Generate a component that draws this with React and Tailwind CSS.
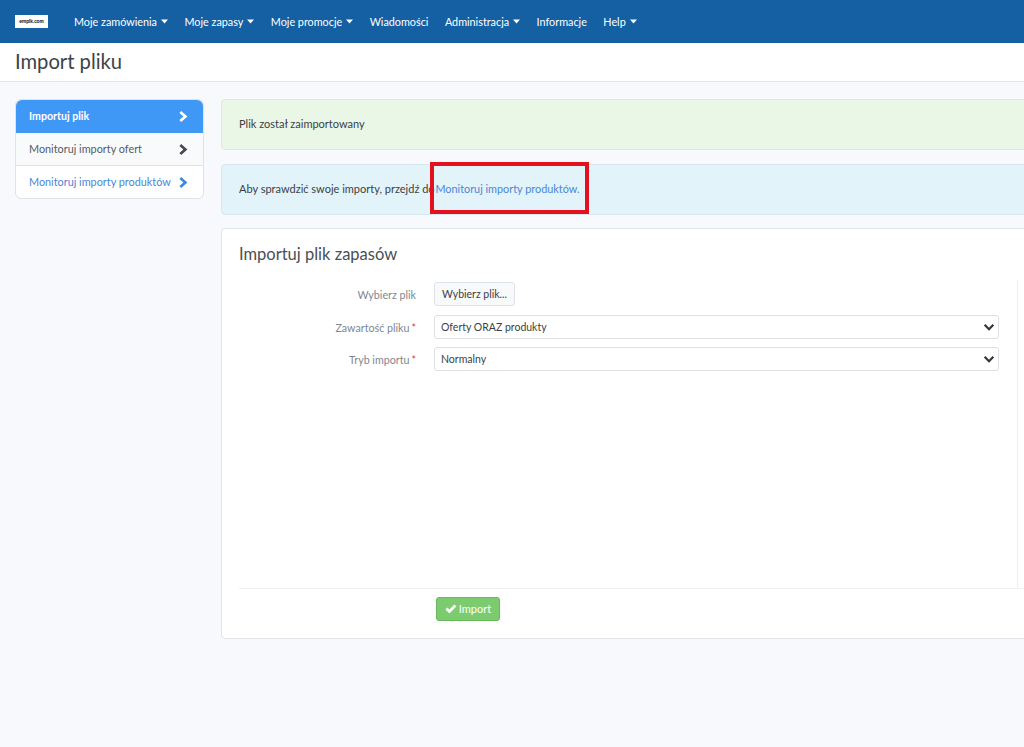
/**
 * Import pliku - strona importu zapasów
 */

const menu = [
    { label: 'Moje zamówienia', caret: true },
    { label: 'Moje zapasy', caret: true },
    { label: 'Moje promocje', caret: true },
    { label: 'Wiadomości' },
    { label: 'Administracja', caret: true },
    { label: 'Informacje' },
    { label: 'Help', caret: true },
];

const boczne = [
    { label: 'Importuj plik', wiersz: 'bg-[#3f97f6] text-white font-bold h-[33px] rounded-t-[6px] text-[10.6px]', ikona: 'text-white' },
    { label: 'Monitoruj importy ofert', wiersz: 'bg-[#f9fafc] text-[#555b62] h-[33px] border-b border-[#dfe3e8]', ikona: 'text-[#454a50]' },
    { label: 'Monitoruj importy produktów', wiersz: 'bg-white text-[#4a86d8] h-[32px] rounded-b-[6px]', ikona: 'text-[#3f8ad8]' },
];

function Strzalka() {
    return (
        <svg className="w-[7px] h-[5px] ml-[4px] mb-[2px] fill-current" viewBox="0 0 10 6">
            <path d="M0 0h10L5 6z" />
        </svg>
    );
}

function Szewron({ className }) {
    return (
        <svg className={`w-[9px] h-[11px] fill-current ${className}`} viewBox="0 0 9 11">
            <path d="M2.2 0L8.4 5.5 2.2 11 .4 9 4.4 5.5 .4 2z" />
        </svg>
    );
}

function Pole({ label, wymagane, children }) {
    return (
        <div className="flex items-center h-[28px]">
            <div className="w-[177px] pt-[3px] text-right text-[10.7px] text-[#7d8794] shrink-0">
                {label}
                {wymagane && <span className="text-[#e0434b] ml-[2px]">*</span>}
            </div>
            <div className="pl-[18px] flex-1">{children}</div>
        </div>
    );
}

function Lista({ value }) {
    return (
        <div className="h-[24px] w-[565px] flex items-center justify-between pl-[6px] pr-[2px] bg-white border border-[#dcdfe4] rounded-[3px] text-[10.5px] text-[#3a3f45]">
            <span className="pt-[2px]">{value}</span>
            <svg className="w-[14px] h-[14px] text-[#33373c]" viewBox="0 0 16 16" fill="none" stroke="currentColor" strokeWidth="2.6">
                <path d="M3 5.5l5 5 5-5" />
            </svg>
        </div>
    );
}

export default function App() {
    return (
        <div className="w-[1024px] h-[747px] overflow-hidden bg-[#f7f9fc] font-['Lato',sans-serif] text-[11px]">
            {/* Nawigacja */}
            <nav className="h-[43px] bg-[#1560a3] flex items-center pl-[15px]">
                <div className="w-[33px] h-[13px] bg-white flex items-center justify-center text-[5px] font-bold text-black mr-[26px]">
                    empik.com
                </div>
                <ul className="flex gap-[16.5px] pt-[2px] text-white text-[10.8px]">
                    {menu.map((m) => (
                        <li key={m.label} className="flex items-center">
                            {m.label}
                            {m.caret && <Strzalka />}
                        </li>
                    ))}
                </ul>
            </nav>

            {/* Tytuł */}
            <header className="h-[39px] bg-white border-b border-[#e3e6ea] pl-[15px] pt-[8px] flex items-start">
                <h1 className="text-[20.2px] text-[#3d4349] leading-[20px]">Import pliku</h1>
            </header>

            <main className="flex pt-[17px] pl-[15px]">
                {/* Menu boczne */}
                <aside className="w-[189px] h-[100px] shrink-0 border border-[#dfe3e8] rounded-[6px] flex flex-col text-[10.85px]">
                    {boczne.map((b) => (
                        <div key={b.label} className={`flex items-center justify-between whitespace-nowrap pl-[13px] pr-[15px] ${b.wiersz}`}>
                            {b.label}
                            <Szewron className={b.ikona} />
                        </div>
                    ))}
                </aside>

                {/* Zawartość */}
                <div className="ml-[17px] w-[830px] shrink-0">
                    <div className="h-[51px] bg-[#eaf6e6] border border-[#dfe9da] rounded-[4px] pl-[17px] pb-[1px] flex items-center text-[#3a3f45]">
                        Plik został zaimportowany
                    </div>
                    <div className="relative mt-[14px] h-[51px] bg-[#e2f3f9] border border-[#d6e8ee] rounded-[4px] pl-[17px] pb-[1px] flex items-center text-[#3a3f45]">
                        <span>
                            Aby sprawdzić swoje importy, przejdź do <span className="text-[#4a86d8] text-[10.85px] ml-[-2px]">Monitoruj importy produktów.</span>
                        </span>
                        <div className="absolute left-[208px] top-[-3px] w-[159px] h-[52px] border-[4px] border-[#e3101e]" />
                    </div>

                    <section className="mt-[13px] h-[411px] bg-white border border-[#e1e4e8] rounded-[4px] pl-[17px] pt-[14px]">
                        <h2 className="text-[16.5px] text-[#4a4f55] leading-[22px]">Importuj plik zapasów</h2>
                        <div className="mt-[15px] h-[308px] border-r border-[#eef0f2] w-[779px] flex flex-col gap-[4.5px]">
                            <Pole label="Wybierz plik">
                                <div className="inline-flex items-center h-[24px] px-[7px] bg-[#f8f9fb] border border-[#dfe2e6] rounded-[3px] text-[10.5px] text-[#3a3f45]">
                                    <span className="pt-[2px]">Wybierz plik...</span>
                                </div>
                            </Pole>
                            <Pole label="Zawartość pliku" wymagane>
                                <Lista value="Oferty ORAZ produkty" />
                            </Pole>
                            <Pole label="Tryb importu" wymagane>
                                <Lista value="Normalny" />
                            </Pole>
                        </div>
                        <div className="border-t border-[#eef0f2] pt-[8px] pl-[197px]">
                            <button className="h-[24px] w-[64px] flex items-center justify-center gap-[2px] bg-[#7ccc6f] border border-[#68b85c] rounded-[3px] text-white text-[11px]">
                                <svg className="w-[12px] h-[12px] fill-current" viewBox="0 0 12 12">
                                    <path d="M.5 6.5l1.9-1.9 2 2L9.4 1.6l1.9 1.9L4.4 10.4z" />
                                </svg>
                                Import
                            </button>
                        </div>
                    </section>
                </div>
            </main>
        </div>
    );
}
